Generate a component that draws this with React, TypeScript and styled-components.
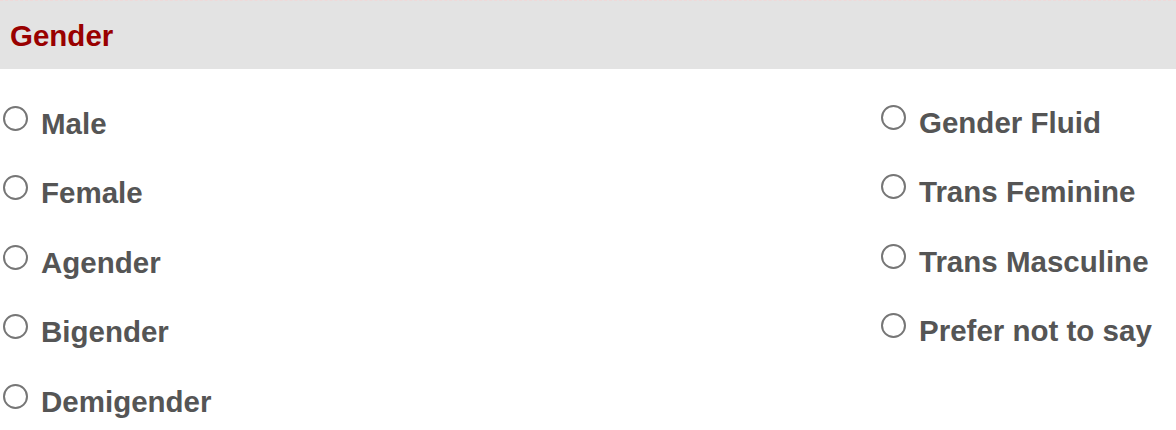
import React from 'react';
import styled, { createGlobalStyle } from 'styled-components';

const GlobalStyle = createGlobalStyle`
  body {
    margin: 0;
    background: #ffffff;
    font-family: "Liberation Sans", Arial, sans-serif;
  }
`;

const leftOptions = ['Male', 'Female', 'Agender', 'Bigender', 'Demigender'];
const rightOptions = ['Gender Fluid', 'Trans Feminine', 'Trans Masculine', 'Prefer not to say'];

const App: React.FC = () => {
  return (
    <>
      <GlobalStyle />
      <Section>
        <Header>Gender</Header>
        <Options>
          <Column>
            {leftOptions.map((label) => (
              <Option key={label}>
                <Radio type="radio" name="gender" value={label} />
                {label}
              </Option>
            ))}
          </Column>
          <Column $right>
            {rightOptions.map((label) => (
              <Option key={label}>
                <Radio type="radio" name="gender" value={label} />
                {label}
              </Option>
            ))}
          </Column>
        </Options>
      </Section>
    </>
  );
};

export default App;

const Section = styled.div`
  width: 1176px;
`;

const Header = styled.h2`
  margin: 0;
  height: 69px;
  box-sizing: border-box;
  border-top: 1px dashed #efd9d9;
  padding: 2px 10px 0;
  background: #e3e3e3;
  color: #990000;
  font-size: 29.5px;
  font-weight: bold;
  line-height: 66px;
`;

const Options = styled.div`
  display: flex;
  justify-content: space-between;
  padding-top: 35.5px;
`;

const Column = styled.div<{ $right?: boolean }>`
  display: flex;
  flex-direction: column;
  gap: 31.5px;
  width: ${(p) => (p.$right ? '295px' : 'auto')};
  padding-left: ${(p) => (p.$right ? '0' : '3px')};
  margin-top: ${(p) => (p.$right ? '-1px' : '0')};
`;

const Option = styled.label`
  display: flex;
  align-items: flex-start;
  gap: 13px;
  color: #555555;
  font-size: 29.5px;
  font-weight: bold;
  line-height: 38px;
  cursor: pointer;
`;

const Radio = styled.input`
  appearance: none;
  flex: none;
  width: 25px;
  height: 25px;
  margin: 1px 0 0;
  border: 2px solid #767676;
  border-radius: 50%;
  background: #ffffff;
  box-sizing: border-box;

  &:checked {
    background: radial-gradient(circle, #555555 0 45%, #ffffff 50%);
  }
`;
